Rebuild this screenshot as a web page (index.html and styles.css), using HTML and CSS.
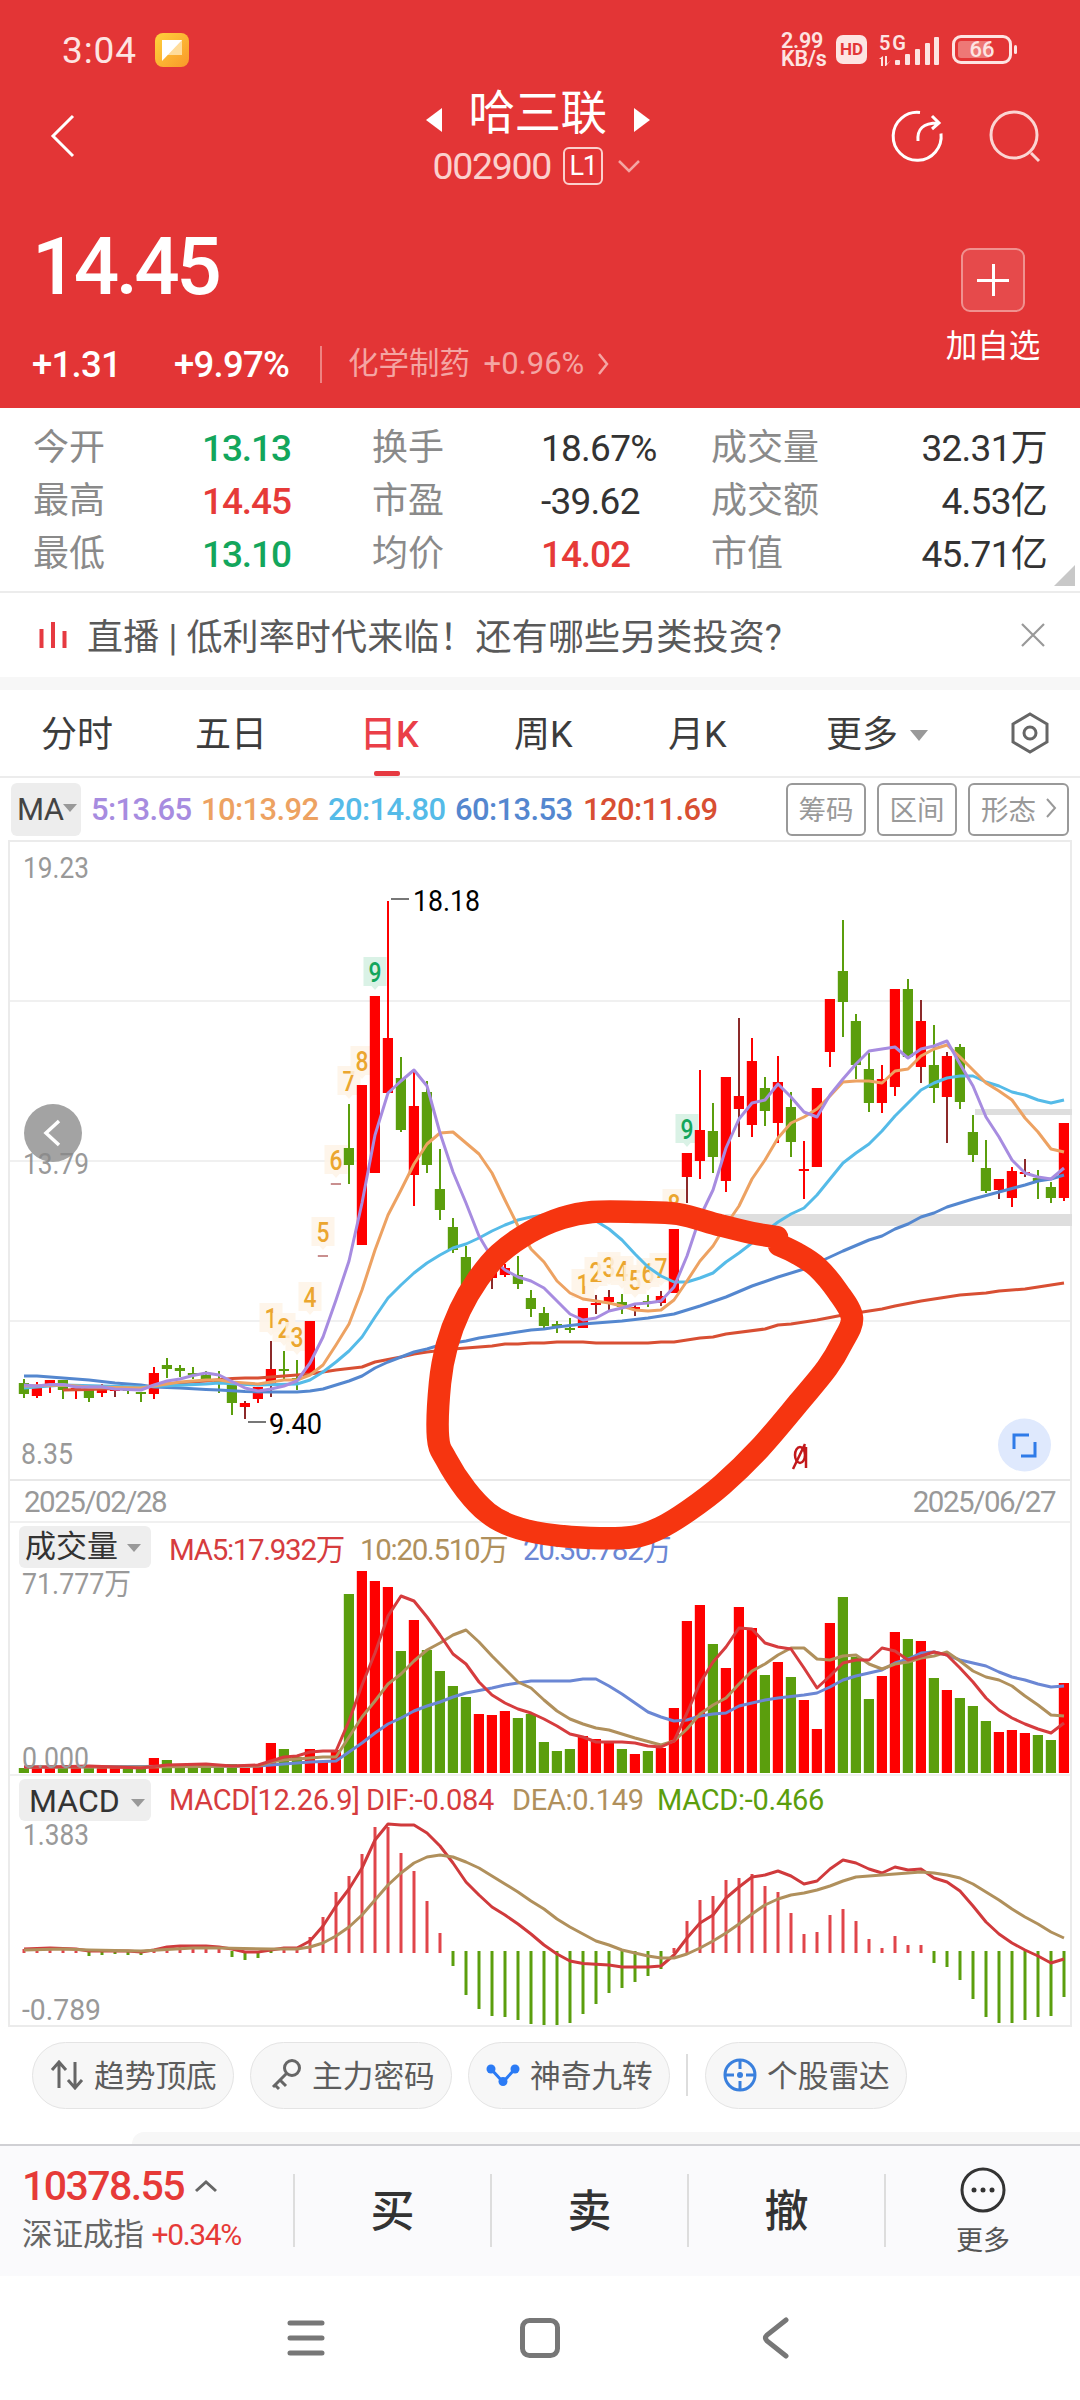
FILE: index.html
```html
<!DOCTYPE html>
<html lang="zh-CN">

<head>
  <meta charset="UTF-8" />
  <meta name="viewport" content="width=device-width, initial-scale=1" />
  <title>哈三联 002900</title>
  <link rel="stylesheet" href="styles.css">
</head>

<body>
  <header class="header">
    <div class="status-bar">
      <span class="clock">3:04</span>
      <svg class="note-icon" width="34" height="34" viewBox="0 0 34 34">
        <defs>
          <linearGradient id="noteBg" x1="0" y1="0" x2="1" y2="1">
            <stop offset="0" stop-color="#ffd23c" />
            <stop offset="1" stop-color="#f9982a" />
          </linearGradient>
        </defs>
        <rect width="34" height="34" rx="8" fill="url(#noteBg)" />
        <path d="M7 7h20v15H13z" fill="#ffdc9a" />
        <path d="M7 7h20L7 28z" fill="#fff" />
      </svg>
      <span class="net-speed">2.99<br>KB/s</span>
      <span class="hd">HD</span>
      <svg class="signal" width="62" height="32" viewBox="878 33 62 32">
        <text x="879" y="49" textLength="27">5G</text>
        <g fill="#fde4e2">
          <path d="M879 58l4-3v10h-2v-7zM885 55h2v8l4-4-5 6h-1z" />
          <rect x="895" y="59" width="5" height="5" rx="1" />
          <rect x="905" y="53" width="5" height="11" rx="1" />
          <rect x="915" y="48" width="5" height="16" rx="1" />
          <rect x="925" y="42" width="5" height="22" rx="1" />
          <rect x="934" y="36" width="5" height="28" rx="1" />
        </g>
      </svg>
      <span class="battery"><i></i><b>66</b></span>
    </div>

    <div class="title-bar">
      <svg class="back" width="26" height="44" viewBox="0 0 26 44"><path d="M23 2L3 22l20 20" /></svg>
      <div class="title">
        <div class="title-name">
          <svg width="16" height="24" viewBox="0 0 16 24"><path d="M16 0v24L0 12z" fill="#fff" /></svg>
          <h1>哈三联</h1>
          <svg width="16" height="24" viewBox="0 0 16 24"><path d="M0 0v24L16 12z" fill="#fff" /></svg>
        </div>
        <div class="title-code">
          <span>002900</span>
          <em>L1</em>
          <svg width="22" height="12" viewBox="0 0 22 12"><path d="M1 1l10 10L21 1" /></svg>
        </div>
      </div>
      <div class="title-icons">
        <svg width="52" height="52" viewBox="0 0 52 52">
          <path d="M28 2.500A24 24 0 1 0 49 23.500" />
          <path d="M26 31c-1-12 5-18 20-18M40 6l7 7-7 6" />
        </svg>
        <svg class="search" width="52" height="54" viewBox="0 0 52 54">
          <circle cx="25" cy="25" r="23" />
          <path d="M42 43l8 8" />
        </svg>
      </div>
    </div>

    <div class="quote">
      <div class="quote-main">
        <div class="price">14.45</div>
        <div class="change">
          <span class="chg">+1.31</span>
          <span class="pct">+9.97%</span>
          <span class="sector">化学制药 <b>+0.96%</b></span>
          <svg width="12" height="22" viewBox="0 0 12 22"><path d="M2 1l8 10-8 10" /></svg>
        </div>
      </div>
      <div class="add">
        <span class="add-btn"></span>
        <span>加自选</span>
      </div>
    </div>
  </header>

  <section class="stats">
    <span>今开</span><b class="down">13.13</b><span>换手</span><b>18.67%</b><span>成交量</span><b class="end">32.31万</b>
    <span>最高</span><b class="up">14.45</b><span>市盈</span><b>-39.62</b><span>成交额</span><b class="end">4.53亿</b>
    <span>最低</span><b class="down">13.10</b><span>均价</span><b class="up">14.02</b><span>市值</span><b class="end">45.71亿</b>
    <i class="corner"></i>
  </section>

  <section class="live">
    <svg width="28" height="26" viewBox="0 0 28 26">
      <path d="M2.500 7v19M14 0v26M25.500 9v17" stroke="#e63a41" stroke-width="4" />
    </svg>
    <p>直播 | 低利率时代来临！还有哪些另类投资?</p>
    <svg class="close" width="24" height="24" viewBox="0 0 24 24"><path d="M1 1l22 22M23 1L1 23" /></svg>
  </section>

  <nav class="tabs">
    <span>分时</span>
    <span>五日</span>
    <span class="active">日K</span>
    <span>周K</span>
    <span>月K</span>
    <span class="more">更多</span>
    <svg width="40" height="42" viewBox="0 0 40 42">
      <path d="M20 2l17 10v18L20 40 3 30V12z" />
      <circle cx="20" cy="21" r="6" />
    </svg>
  </nav>

  <section class="ma-row">
    <span class="ma-btn">MA</span>
    <span class="ma5">5:13.65</span>
    <span class="ma10">10:13.92</span>
    <span class="ma20">20:14.80</span>
    <span class="ma60">60:13.53</span>
    <span class="ma120">120:11.69</span>
    <div class="tools">
      <span>筹码</span>
      <span>区间</span>
      <span class="shape">形态<svg width="10" height="22" viewBox="0 0 10 22"><path d="M1 2l8 9-8 9" /></svg></span>
    </div>
  </section>

  <section class="chart">
    <svg id="price" width="1060" height="637" viewBox="10 842 1060 637"></svg>
    <div class="dates"><span>2025/02/28</span><span>2025/06/27</span></div>

    <div class="legend">
      <span class="legend-btn">成交量</span>
      <span class="c-red" style="width: 191px">MA5:17.932万</span>
      <span class="c-tan" style="width: 163px">10:20.510万</span>
      <span class="c-blue">20:30.782万</span>
    </div>
    <svg id="volume" width="1060" height="204" viewBox="10 1570 1060 204"></svg>

    <div class="legend macd-legend">
      <span class="legend-btn macd-btn">MACD</span>
      <span class="c-red" style="width: 197px">MACD[12.26.9]</span>
      <span class="c-red" style="width: 146px">DIF:-0.084</span>
      <span class="c-tan" style="width: 145px">DEA:0.149</span>
      <span class="c-green">MACD:-0.466</span>
    </div>
    <svg id="macd" width="1060" height="204" viewBox="10 1821 1060 204"></svg>

    <svg id="scribble" width="1060" height="1183" viewBox="10 842 1060 1183"></svg>
  </section>

  <section class="chips">
    <span class="chip">
      <svg width="34" height="32" viewBox="0 0 34 32"><path d="M9 29V4M2 11l7-8 7 8M25 3v25M18 21l7 8 7-8" /></svg><b>趋势顶底</b>
    </span>
    <span class="chip">
      <svg width="34" height="32" viewBox="0 0 34 32"><circle cx="24" cy="9" r="7.500" /><path d="M19 14L5 28M12 21l6 6M7 26l4 4" /></svg><b>主力密码</b>
    </span>
    <span class="chip">
      <svg width="34" height="32" viewBox="0 0 34 32"><path d="M5 10l12 13L29 10" stroke="#2b7bf5" /><g fill="#2b7bf5" stroke="none"><circle cx="5" cy="10" r="4.500" /><circle cx="17" cy="22.500" r="4.500" /><circle cx="29" cy="10" r="4.500" /></g></svg><b>神奇九转</b>
    </span>
    <i class="chip-line"></i>
    <span class="chip">
      <svg width="34" height="34" viewBox="0 0 34 34"><g stroke="#3a80dd"><circle cx="17" cy="17" r="15" /><path d="M17 2v9M17 23v9M2 17h9M23 17h9" /></g><circle cx="17" cy="17" r="3" fill="#3a80dd" stroke="none" /></svg><b>个股雷达</b>
    </span>
  </section>
  <div class="next-card"></div>

  <footer class="trade-bar">
    <div class="index">
      <div class="index-value">10378.55
        <svg width="24" height="13" viewBox="0 0 24 13"><path d="M2 11L12 2l10 9" /></svg>
      </div>
      <div class="index-name">深证成指 <b>+0.34%</b></div>
    </div>
    <span class="trade">买</span>
    <span class="trade">卖</span>
    <span class="trade">撤</span>
    <div class="trade-more">
      <svg width="46" height="46" viewBox="0 0 46 46">
        <circle cx="23" cy="23" r="21" />
        <g fill="#333" stroke="none"><circle cx="14" cy="23" r="2.500" /><circle cx="23" cy="23" r="2.500" /><circle cx="32" cy="23" r="2.500" /></g>
      </svg>
      <span>更多</span>
    </div>
  </footer>

  <div class="system-nav">
    <svg width="38" height="36" viewBox="0 0 38 36"><path d="M3 3h32M3 18h32M3 33h32" /></svg>
    <svg width="40" height="40" viewBox="0 0 40 40"><rect x="2.500" y="2.500" width="35" height="35" rx="7" /></svg>
    <svg width="28" height="40" viewBox="0 0 28 40"><path d="M25 2L6 17q-3 3 0 6l19 15" /></svg>
  </div>

  <script src="chart.js"></script>
</body>

</html>
```
FILE: styles.css
```css
html,
body {
  margin: 0;
  padding: 0;
  width: 1080px;
  background: #fff;
  font-family: Roboto, "Noto Sans CJK SC", sans-serif;
  color: #333;
}

* {
  box-sizing: border-box;
}

b,
em,
i,
h1 {
  font-weight: inherit;
  font-style: normal;
}

svg {
  display: block;
  flex: none;
  fill: none;
  overflow: visible;
}

.header {
  height: 408px;
  background: #e33536;
  color: #fff;
}

/* status bar */
.status-bar {
  height: 82px;
  padding: 17px 68px 0 62px;
  display: flex;
  align-items: center;
  color: #fde4e2;
}

.clock {
  font-size: 37px;
  line-height: 50px;
  width: 93px;
  padding-top: 2px;
  letter-spacing: 0.9px;
}

.net-speed {
  margin-left: auto;
  width: 55px;
  font-size: 21.500px;
  line-height: 18px;
  font-weight: 600;
  letter-spacing: -0.2px;
}

.hd {
  width: 31px;
  height: 29px;
  border-radius: 7px;
  background: #fde4e2;
  color: #e33536;
  font-size: 17px;
  line-height: 29px;
  font-weight: 700;
  text-align: center;
}

.signal {
  margin: 0 12px 0 11px;
}

.signal text {
  font: 600 20px Roboto, sans-serif;
  fill: #fde4e2;
}

.battery {
  position: relative;
  width: 60px;
  height: 29px;
  border: 3px solid #fde4e2;
  border-radius: 9px;
  text-align: center;
  font-size: 22px;
  line-height: 24px;
  font-weight: 500;
}

.battery i {
  position: absolute;
  left: 3px;
  top: 3px;
  width: 32px;
  height: 17px;
  border-radius: 3px;
  background: #ee7876;
}

.battery b {
  position: relative;
}

.battery::after {
  content: "";
  position: absolute;
  right: -8px;
  top: 7px;
  width: 3px;
  height: 9px;
  border-radius: 2px;
  background: #fde4e2;
}

/* title */
.title-bar {
  height: 118px;
  display: flex;
  justify-content: space-between;
  padding: 0 42px 0 50px;
}

.title-bar svg {
  stroke: #fff;
  stroke-width: 3;
}

.back {
  margin-top: 32px;
}

.title {
  padding-left: 107px;
}

.title-name {
  height: 61px;
  display: flex;
  justify-content: center;
  align-items: center;
  gap: 27px;
}

.title .title-name svg {
  stroke: none;
  margin-top: 15px;
}

.title h1 {
  margin: 0;
  font-size: 46.500px;
  line-height: 58px;
  letter-spacing: -0.5px;
}

.title-code {
  display: flex;
  align-items: center;
  height: 46px;
  padding-left: 7px;
  font-size: 37.500px;
  letter-spacing: -0.035em;
  color: #fbd0cd;
}

.title-code em {
  width: 40px;
  height: 38px;
  margin: 0 15px 0 12px;
  border: 2px solid #fbd0cd;
  border-radius: 6px;
  font-size: 27px;
  line-height: 34px;
  text-align: center;
  color: #fff;
}

.title .title-code svg {
  stroke: #f4a5a3;
  stroke-width: 2.5;
}

.title-icons {
  display: flex;
  gap: 45px;
  margin-top: 28px;
}

.title-icons .search {
  stroke: #fbd5d3;
  margin-right: -3px;
}

/* quote */
.quote {
  display: flex;
  justify-content: space-between;
  padding: 0 40px 0 32px;
}

.price {
  height: 134px;
  font-size: 80px;
  line-height: 134px;
  font-weight: 500;
  letter-spacing: -0.045em;
}

.change {
  display: flex;
  align-items: center;
  height: 60px;
  font-size: 36.500px;
  font-weight: 500;
  letter-spacing: -0.02em;
}

.chg {
  width: 142px;
}

.pct {
  width: 148px;
  height: 37px;
  line-height: 37px;
  border-right: 2px solid #ee8382;
}

.sector {
  width: 270px;
  padding-left: 26px;
  font-size: 30.500px;
  font-weight: 400;
  line-height: 36px;
  letter-spacing: 0;
  color: #f4a5a3;
  white-space: nowrap;
}

.sector b {
  font-size: 31px;
  margin-left: 6px;
}

.change svg {
  margin-left: 5px;
  stroke: #f4a5a3;
  stroke-width: 2.5;
}

.add {
  width: 94px;
  margin-top: 48px;
  font-size: 31.500px;
  line-height: 44px;
  display: flex;
  flex-direction: column;
  align-items: center;
  white-space: nowrap;
}

.add-btn {
  width: 64px;
  height: 64px;
  border: 2px solid #f0918f;
  border-radius: 9px;
  margin-bottom: 13px;
  background:
    linear-gradient(#fff, #fff) center / 32px 3px no-repeat,
    linear-gradient(#fff, #fff) center / 3px 32px no-repeat,
    #e64a4b;
}

/* stats */
.stats {
  position: relative;
  display: grid;
  grid-template-columns: 169px 170px 169px 170px 120px 216px;
  grid-auto-rows: 53px;
  height: 185px;
  padding: 14px 33px 0;
  border-bottom: 2px solid #ececec;
  font-size: 36px;
  line-height: 53px;
}

.stats span {
  color: #8a8a8a;
  white-space: nowrap;
}

.stats b {
  font-size: 37px;
  letter-spacing: -0.02em;
}

.stats .up,
.stats .down {
  font-weight: 500;
  letter-spacing: -0.03em;
}

.stats .end {
  text-align: right;
}

.stats .up {
  color: #e63a38;
}

.stats .down {
  color: #13a65c;
}

.corner {
  position: absolute;
  right: 5px;
  bottom: 5px;
  border-left: 21px solid transparent;
  border-bottom: 21px solid #c8c8c8;
}

/* live */
.live {
  display: flex;
  align-items: center;
  height: 97px;
  padding: 0 35px 0 39px;
  border-bottom: 13px solid #f7f7f7;
}

.live p {
  margin: -3px auto 0 20px;
  font-size: 36px;
  letter-spacing: 0.15px;
  color: #595959;
  white-space: nowrap;
}

.live .close {
  stroke: #999;
  stroke-width: 2.2;
}

/* tabs */
.tabs {
  display: flex;
  align-items: center;
  height: 88px;
  padding-left: 41px;
  border-bottom: 2px solid #ececec;
  font-size: 36px;
  color: #3c3c3c;
}

.tabs span {
  position: relative;
  width: 154px;
  height: 86px;
  line-height: 90px;
  white-space: nowrap;
}

.tabs span:nth-child(2) {
  width: 165px;
}

.tabs span:nth-child(5) {
  width: 158px;
}

.tabs .active {
  color: #ea3f48;
  font-weight: 500;
}

.tabs .active::after {
  content: "";
  position: absolute;
  left: 14px;
  bottom: 0;
  width: 26px;
  height: 5px;
  border-radius: 2px;
  background: #e63a41;
}

.tabs .more {
  width: 184px;
}

.more::after,
.ma-btn::after,
.legend-btn::after {
  content: "";
  display: inline-block;
  border: solid transparent;
  border-width: 11px 9px 0;
  border-top-color: #999;
  margin-left: 12px;
  vertical-align: 6px;
}

.tabs svg {
  stroke: #666;
  stroke-width: 3;
}

/* moving average row */
.ma-row {
  display: flex;
  align-items: center;
  height: 62px;
  padding: 0 11px;
  font-size: 31px;
  font-weight: 500;
  letter-spacing: -0.02em;
  white-space: nowrap;
}

.ma-btn {
  width: 70px;
  height: 53px;
  margin-right: 10px;
  padding-left: 6px;
  border-radius: 6px;
  background: #ededed;
  font-weight: 400;
  line-height: 54px;
  color: #444;
}

.ma-btn::after {
  border-width: 8px 7px 0;
  margin-left: 0;
  vertical-align: 8px;
}

.ma5 {
  width: 110px;
  color: #a78ce0;
}

.ma10 {
  width: 127px;
  color: #eda262;
}

.ma20 {
  width: 127px;
  color: #55bbe8;
}

.ma60 {
  width: 128px;
  color: #5487cf;
}

.ma120 {
  color: #d84f33;
}

.tools {
  display: flex;
  gap: 11px;
  margin-left: auto;
  font-weight: 400;
}

.tools span {
  display: flex;
  align-items: center;
  justify-content: center;
  width: 80px;
  height: 53px;
  padding-bottom: 2px;
  border: 2px solid #999;
  border-radius: 6px;
  font-size: 27.500px;
  letter-spacing: 0;
  color: #999;
}

.tools .shape {
  width: 101px;
  gap: 10px;
}

.shape svg {
  stroke: #999;
  stroke-width: 2;
}

/* charts */
.chart {
  position: relative;
  width: 1064px;
  height: 1187px;
  margin-left: 8px;
  border: 2px solid #ebebeb;
}

.chart text {
  font-family: Roboto, "Noto Sans CJK SC", sans-serif;
}

#scribble {
  position: absolute;
  left: 0;
  top: 0;
}

.dates {
  display: flex;
  justify-content: space-between;
  height: 44px;
  padding: 0 15px 0 14px;
  border-top: 2px solid #e8e8e8;
  border-bottom: 2px solid #f0f0f0;
  font-size: 29.500px;
  line-height: 43px;
  letter-spacing: -0.05em;
  color: #999;
}

.legend {
  display: flex;
  align-items: center;
  height: 47px;
  padding: 0 9px;
  font-size: 29.500px;
  letter-spacing: -0.044em;
  white-space: nowrap;
}

.legend-btn {
  width: 132px;
  height: 42px;
  margin-right: 18px;
  padding-left: 6px;
  border-radius: 6px;
  background: #eee;
  color: #333;
  font-size: 31px;
  line-height: 42px;
  letter-spacing: 0;
}

.legend-btn::after {
  border-width: 8px 7px 0;
  margin-left: 9px;
  vertical-align: 5px;
}

.macd-legend {
  padding-top: 2px;
  border-top: 2px solid #f0f0f0;
  font-size: 29px;
  letter-spacing: -0.01em;
}

.macd-btn {
  padding-left: 10px;
  font-size: 32px;
  line-height: 44px;
}

.macd-btn::after {
  margin-left: 11px;
}

.c-red {
  color: #d63c3e;
}

.c-tan {
  color: #b0905c;
}

.c-blue {
  color: #6b87d4;
}

.c-green {
  color: #5b9e0d;
}

/* chips */
.chips {
  display: flex;
  align-items: center;
  height: 105px;
  padding: 0 32px 9px;
}

.chip {
  display: flex;
  align-items: center;
  gap: 10px;
  width: 202px;
  height: 67px;
  margin-right: 16px;
  padding-left: 17px;
  border: 1.500px solid #e4e4e4;
  border-radius: 34px;
  background: #f7f7f7;
  font-size: 30.700px;
  color: #5c5c5c;
  white-space: nowrap;
}

.chip b {
  padding-bottom: 3px;
}

.chip svg {
  stroke: #666;
  stroke-width: 3;
}

.chip-line {
  width: 2px;
  height: 42px;
  margin-right: 17px;
  background: #ddd;
}

.next-card {
  height: 12px;
  margin-left: 132px;
  border-top-left-radius: 12px;
  background: #f7f7f7;
}

/* trade bar */
.trade-bar {
  display: flex;
  height: 132px;
  border-top: 2px solid #d0d0d4;
  background: #fafafc;
}

.index {
  width: 293px;
  padding: 14px 0 0 22px;
}

.index-value {
  display: flex;
  align-items: center;
  gap: 10px;
  height: 52px;
  font-size: 41px;
  font-weight: 500;
  letter-spacing: -0.038em;
  color: #e63a38;
}

.index-value svg {
  stroke: #666;
  stroke-width: 3;
}

.index-name {
  height: 46px;
  font-size: 30.500px;
  line-height: 45px;
  color: #666;
}

.index-name b {
  font-size: 30px;
  letter-spacing: -0.045em;
  color: #e63a38;
}

.trade {
  width: 197px;
  height: 73px;
  margin-top: 28px;
  border-left: 2px solid #ddd;
  font-size: 44px;
  line-height: 76px;
  font-weight: 500;
  text-align: center;
}

.trade-more {
  width: 196px;
  height: 73px;
  margin-top: 28px;
  border-left: 2px solid #ddd;
  display: flex;
  flex-direction: column;
  align-items: center;
  font-size: 27px;
  color: #555;
}

.trade-more svg {
  margin-top: -7px;
  stroke: #333;
  stroke-width: 3;
}

.trade-more span {
  line-height: 56px;
}

.system-nav {
  display: flex;
  align-items: center;
  height: 124px;
  padding-left: 287px;
  background: #fff;
}

.system-nav svg {
  stroke: #777;
  stroke-width: 5;
  stroke-linecap: round;
  margin-right: 195px;
}

.system-nav svg:nth-child(2) {
  margin-right: 201px;
}
```
FILE: chart.js
```js
const RED = "#fe0000";
const DARK = "#8c2a2a";
const GREEN = "#5b9e0d";

// x of the n-th trading day
const X = i => 24 + 13 * i;

// [color, body top, body bottom, high, low]
const candles = [
  ["g", 1383, 1394, 1379, 1398], ["r", 1386, 1396, 1382, 1398], ["r", 1380, 1384, 1380, 1393],
  ["g", 1380, 1390, 1380, 1399], ["r", 1388, 1390, 1388, 1399], ["g", 1388, 1398, 1388, 1402],
  ["r", 1388, 1393, 1384, 1397], ["d", 1389, 1391, 1389, 1397], ["g", 1389, 1391, 1389, 1394],
  ["g", 1392, 1394, 1392, 1402], ["r", 1373, 1394, 1367, 1399], ["g", 1365, 1369, 1358, 1378],
  ["g", 1368, 1371, 1365, 1377], ["g", 1373, 1375, 1367, 1379], ["g", 1375, 1379, 1371, 1380],
  ["g", 1380, 1383, 1371, 1393], ["g", 1385, 1403, 1385, 1415], ["d", 1403, 1407, 1401, 1419],
  ["r", 1387, 1399, 1387, 1403], ["d", 1369, 1384, 1341, 1397], ["g", 1369, 1371, 1351, 1380],
  ["g", 1378, 1379, 1360, 1390], ["r", 1321, 1374, 1321, 1374], ["f", 1255, 1257, 1255, 1257],
  ["f", 1183, 1185, 1183, 1185], ["g", 1148, 1165, 1104, 1184], ["r", 1085, 1245, 1085, 1245],
  ["r", 996, 1173, 996, 1173], ["r", 1038, 1093, 901, 1093], ["g", 1078, 1130, 1057, 1132],
  ["r", 1106, 1175, 1069, 1206], ["g", 1092, 1165, 1081, 1173], ["g", 1189, 1210, 1149, 1220],
  ["g", 1227, 1250, 1218, 1253], ["g", 1257, 1292, 1246, 1295], ["r", 1280, 1290, 1275, 1294],
  ["d", 1268, 1278, 1262, 1289], ["r", 1268, 1275, 1264, 1277], ["g", 1275, 1284, 1256, 1289],
  ["g", 1298, 1309, 1290, 1317], ["g", 1313, 1326, 1307, 1330], ["g", 1324, 1327, 1321, 1333],
  ["g", 1328, 1330, 1318, 1333], ["r", 1308, 1328, 1308, 1328], ["d", 1303, 1305, 1295, 1314],
  ["d", 1297, 1302, 1290, 1311], ["g", 1302, 1307, 1294, 1314], ["d", 1307, 1309, 1305, 1316],
  ["g", 1301, 1302, 1295, 1307], ["d", 1296, 1303, 1291, 1306], ["r", 1229, 1293, 1229, 1293],
  ["d", 1153, 1177, 1153, 1203], ["r", 1130, 1161, 1070, 1179], ["g", 1131, 1157, 1103, 1173],
  ["r", 1077, 1181, 1077, 1192], ["d", 1096, 1109, 1018, 1137], ["r", 1061, 1125, 1038, 1137],
  ["g", 1088, 1111, 1077, 1126], ["r", 1082, 1123, 1056, 1143], ["g", 1107, 1142, 1092, 1157],
  ["r", 1169, 1171, 1141, 1199], ["r", 1088, 1167, 1088, 1167], ["r", 999, 1052, 999, 1067],
  ["g", 971, 1002, 920, 1037], ["g", 1021, 1065, 1014, 1079], ["g", 1069, 1103, 1053, 1112],
  ["r", 1079, 1103, 1065, 1113], ["r", 989, 1087, 989, 1096], ["g", 989, 1057, 979, 1057],
  ["d", 1021, 1067, 1000, 1083], ["g", 1065, 1088, 1025, 1103], ["d", 1056, 1097, 1052, 1143],
  ["g", 1047, 1102, 1044, 1109], ["g", 1132, 1155, 1115, 1162], ["g", 1168, 1191, 1140, 1193],
  ["d", 1179, 1190, 1179, 1199], ["r", 1171, 1198, 1167, 1207], ["d", 1172, 1174, 1159, 1177],
  ["g", 1178, 1181, 1170, 1199], ["g", 1187, 1198, 1182, 1203], ["r", 1123, 1198, 1123, 1201]
];

// moving averages, [day, y] pairs
const ma120 = [3,1390, 5,1389.5, 7,1388.5, 9,1387, 10,1386, 11,1384, 13,1382, 14,1381, 16,1378.5, 17,1378, 18,1378, 20,1376, 22,1374, 23,1372, 24,1370, 26,1367, 27,1362, 29,1357, 30,1354, 31,1352, 33,1349, 36,1346, 37,1344, 38,1344, 39,1343, 40,1343, 41,1342, 43,1342, 44,1343, 48,1343, 49,1342, 50,1342, 52,1338, 53,1337, 54,1334, 57,1329, 58,1325, 59,1324, 61,1320, 63,1315, 66,1309, 67,1306, 69,1301, 72,1295, 74,1293, 75,1291, 77,1289, 80,1283];
const ma60 = [0,1376, 1,1376, 3,1378, 5,1380, 7,1383, 9,1385, 10,1387, 12,1388, 14,1389.5, 15,1390, 17,1391.5, 19,1392, 21,1392, 22,1391, 23,1389, 24,1385, 25,1381, 26,1376, 27,1368, 28,1362, 29,1357, 30,1352, 31,1349, 32,1345, 34,1341, 35,1338, 37,1334, 39,1330, 40,1329, 41,1327, 43,1324, 44,1323, 46,1321, 48,1318, 50,1314, 52,1306, 54,1297, 56,1286, 58,1277, 60,1269, 62,1257, 63,1251, 65,1240, 66,1236, 67,1229, 68,1224, 69,1217, 70,1213, 71,1207, 73,1199, 75,1192, 77,1185, 78,1181, 79,1179, 80,1175];
const ma20 = [0,1388, 3,1385, 9,1387, 14,1384, 15,1383, 18,1385, 21,1384, 22,1380, 23,1372, 24,1362, 25,1351, 26,1337, 27,1317, 28,1298, 29,1285, 30,1273, 31,1263, 32,1255, 33,1248, 34,1244, 35,1238, 36,1231, 37,1225, 38,1220, 39,1217, 41,1213, 43,1217, 44,1221, 45,1229, 46,1240, 47,1254, 48,1267, 49,1276, 50,1282, 51,1282, 52,1278, 53,1273, 54,1262, 55,1253, 56,1243, 57,1232, 58,1222, 59,1214, 60,1208, 61,1195, 62,1179, 63,1163, 64,1153, 65,1144, 66,1131, 67,1116, 68,1103, 69,1090, 70,1083, 71,1078, 72,1076, 73,1076, 74,1082, 75,1086, 76,1092, 77,1095, 78,1100, 79,1103, 80,1100];
const ma10 = [0,1386, 3,1385, 5,1387, 9,1388, 10,1386, 11,1384, 12,1382, 13,1381, 14,1380, 15,1380, 16,1382, 17,1383, 18,1384, 19,1382, 20,1380, 21,1380, 22,1375, 23,1365, 24,1345, 25,1324, 26,1290, 27,1250, 28,1215, 29,1190, 30,1164, 31,1144, 32,1133, 33,1132, 34,1143, 35,1154, 36,1173, 37,1200, 38,1226, 39,1249, 40,1262, 41,1281, 42,1293, 43,1299, 44,1301, 45,1303, 46,1306, 47,1310, 48,1311, 49,1310, 50,1300, 51,1281, 52,1261, 53,1246, 54,1225, 55,1206, 56,1179, 57,1160, 58,1138, 59,1123, 60,1117, 61,1109, 62,1096, 63,1082, 64,1081, 65,1081, 66,1083, 67,1071, 68,1069, 69,1056, 70,1049, 71,1045, 72,1057, 73,1070, 74,1083, 75,1091, 76,1100, 77,1118, 78,1132, 79,1149, 80,1152];
const ma5 = [0,1385, 1,1386, 2,1384.5, 3,1384.5, 4,1387, 5,1387, 6,1387, 7,1389, 9,1390, 10,1385, 11,1381, 12,1379, 13,1375.5, 14,1373, 15,1375, 16,1381.5, 17,1388, 18,1391, 19,1389, 20,1386, 21,1381, 22,1363, 23,1337, 24,1300, 25,1261, 26,1203, 27,1135, 28,1093, 29,1081, 30,1070, 31,1086, 32,1133, 33,1172, 34,1203, 35,1236, 36,1258, 37,1270, 38,1277, 39,1281, 40,1288, 41,1301, 42,1314, 43,1320, 44,1318, 45,1311, 46,1308, 47,1304, 48,1303, 49,1301, 50,1287, 51,1256, 52,1217, 53,1190, 54,1148, 55,1119, 56,1103, 57,1100, 58,1084, 59,1097, 60,1112, 61,1117, 62,1095, 63,1079, 64,1064, 65,1051, 66,1049, 67,1047, 68,1058, 69,1049, 70,1046, 71,1041, 72,1064, 73,1086, 74,1117, 75,1137, 76,1160, 77,1173, 78,1177, 79,1179, 80,1168];

// nine-turn markers: [day, label, top]
const turns = [
  [19, 1, 1303], [20, 2, 1313], [21, 3, 1322], [22, 4, 1282], [23, 5, 1217], [24, 6, 1145],
  [25, 7, 1066], [26, 8, 1046], [27, 9, 957],
  [43, 1, 1269], [44, 2, 1257], [45, 3, 1252], [46, 4, 1256], [47, 5, 1265], [48, 6, 1258],
  [49, 7, 1253], [50, 8, 1189], [51, 9, 1114]
];

const volumes = [
  5, 5, 6, 5, 6, 5, 5, 5, 5, 4, 15, 13, 8, 7, 7, 7, 9, 5, 7, 30,
  24, 16, 24, 11, 23, 179, 202, 192, 186, 122, 153, 123, 102, 87, 76, 59, 58, 62, 55, 59,
  31, 22, 24, 37, 34, 30, 24, 19, 22, 25, 65, 152, 168, 129, 105, 166, 145, 98, 111, 96,
  73, 44, 150, 176, 116, 74, 97, 141, 134, 132, 95, 83, 75, 67, 52, 41, 43, 40, 38, 33, 90
];
const vol20 = [0,1767, 18,1766, 20,1764, 22,1762, 24,1761, 25,1752, 26,1743, 27,1733, 28,1724, 29,1718, 30,1711, 31,1706, 32,1702, 33,1697, 34,1693, 36,1688, 37,1685, 38,1683, 39,1681, 42,1681, 43,1679, 44,1679, 45,1686, 46,1694, 47,1703, 48,1712, 49,1717, 50,1721, 51,1720, 52,1716, 53,1714, 54,1713, 55,1706, 56,1703, 57,1700, 58,1698, 60,1695, 61,1693, 62,1687, 63,1680, 64,1676, 65,1673, 66,1670, 67,1663, 68,1659, 69,1653, 70,1652, 71,1655, 72,1660, 73,1663, 74,1666, 75,1672, 76,1677, 77,1680, 78,1684, 79,1687, 80,1686];
const vol10 = [0,1767, 9,1767, 18,1766, 19,1762, 20,1760, 21,1759, 23,1757, 24,1757, 25,1737, 26,1717, 27,1701, 28,1684, 29,1674, 30,1661, 31,1650, 32,1643, 33,1635, 34,1630, 35,1642, 36,1656, 37,1669, 38,1682, 39,1688, 40,1700, 41,1711, 42,1719, 43,1724, 44,1728, 45,1730, 47,1738, 49,1745, 50,1741, 51,1729, 52,1714, 53,1705, 54,1698, 55,1684, 56,1671, 57,1664, 58,1655, 59,1648, 60,1648, 61,1659, 62,1660, 63,1656, 64,1655, 65,1664, 66,1669, 67,1664, 68,1662, 69,1658, 70,1656, 71,1652, 72,1661, 73,1671, 74,1677, 75,1680, 76,1686, 77,1696, 78,1705, 79,1715, 80,1716];
const vol5 = [0,1767, 2,1767, 5,1766, 9,1768, 11,1765, 14,1764, 16,1766, 18,1765, 20,1757, 21,1756, 22,1752, 23,1751, 24,1751, 25,1721, 26,1685, 27,1653, 28,1616, 29,1596, 30,1601, 31,1617, 32,1635, 33,1654, 34,1664, 35,1682, 36,1695, 37,1703, 38,1709, 39,1713, 40,1719, 41,1726, 42,1734, 43,1737, 44,1742, 46,1742, 47,1743, 48,1746, 49,1747, 50,1741, 51,1713, 52,1683, 53,1662, 54,1647, 55,1628, 56,1629, 57,1643, 58,1647, 59,1649, 60,1668, 61,1688, 62,1676, 63,1663, 64,1660, 65,1660, 66,1648, 67,1651, 68,1660, 69,1656, 70,1652, 71,1655, 72,1668, 73,1682, 74,1698, 75,1710, 76,1718, 77,1724, 78,1729, 79,1733, 80,1723];

const macdBars = [
  3, 2, 3, 2, 1, -4, -3, -2, -3, -3, 2, 5, 6, 6, 6, 4, -5, -8, -6, -1,
  4, 4, 15, 35, 60, 76, 98, 125, 125, 99, 81, 51, 19, -14, -43, -57, -64, -65, -68, -72,
  -73, -73, -71, -62, -52, -41, -36, -30, -24, -17, 4, 31, 52, 56, 72, 74, 78, 66, 60, 39,
  18, 20, 37, 43, 31, 13, 4, 16, 7, 7, -11, -15, -28, -47, -65, -71, -71, -68, -65, -64, -45
];
const dif = [0,1949, 2,1948, 4,1949, 5,1951, 8,1951, 9,1952, 10,1950, 11,1947, 12,1946, 14,1946, 15,1947, 16,1949, 17,1952, 18,1952, 20,1948, 21,1948, 22,1941, 23,1926, 24,1906, 25,1889, 26,1868, 27,1840, 28,1824, 29,1825, 30,1825, 31,1833, 32,1846, 33,1863, 34,1882, 35,1895, 36,1907, 37,1915, 38,1924, 39,1934, 40,1945, 41,1954, 42,1961, 43,1963.5, 45,1965, 46,1967, 48,1967, 49,1966, 50,1955, 51,1938, 52,1923, 53,1915, 54,1898, 55,1887, 56,1877, 57,1875, 58,1871, 59,1876, 60,1884, 61,1881, 62,1869, 63,1860, 64,1863, 65,1869, 66,1873, 67,1867, 68,1870, 69,1869, 70,1878, 71,1882, 72,1891, 73,1906, 74,1922, 75,1934, 76,1943, 77,1950, 78,1956, 79,1963, 80,1959];
const dea = [0,1950, 3,1949, 5,1950, 9,1951, 13,1948, 15,1948, 19,1949, 21,1949, 22,1947, 23,1943, 24,1936, 25,1927, 26,1915, 27,1900, 28,1885, 29,1873, 30,1863, 31,1857, 32,1855, 33,1857, 34,1862, 35,1868, 36,1876, 37,1884, 38,1892, 39,1901, 40,1909, 41,1919, 42,1927, 43,1934, 44,1941, 45,1945, 46,1950, 47,1953, 48,1956, 49,1958, 50,1958, 51,1954, 52,1948, 53,1941, 54,1933, 55,1924, 56,1914, 57,1905, 58,1899, 59,1895, 60,1893, 61,1890, 62,1886, 63,1881, 64,1877, 66,1875, 68,1873, 69,1872, 70,1873, 71,1875, 72,1878, 73,1884, 74,1892, 75,1900, 76,1909, 77,1917, 78,1924, 79,1932, 80,1938];

function line(data, color) {
  let pts = "";
  for (let i = 0; i < data.length; i += 2) pts += `${X(data[i])},${data[i + 1]} `;
  return `<polyline points="${pts}" stroke="${color}" stroke-width="3" stroke-linejoin="round"/>`;
}

function label(str, x, y, w, color, size) {
  return `<text x="${x}" y="${y}" textLength="${w}" lengthAdjust="spacingAndGlyphs" font-size="${size || 29.5}" fill="${color || "#999"}">${str}</text>`;
}

function rule(y, color) {
  return `<path d="M10 ${y}H1070" stroke="${color || "#f0f0f0"}" stroke-width="2"/>`;
}

function drawPrice() {
  let s = rule(1001) + rule(1161) + rule(1321);
  s += `<rect x="975" y="1109" width="97" height="6" fill="#dedede"/>`;
  s += `<rect x="725" y="1214" width="347" height="12" fill="#dedede"/>`;

  turns.forEach(([i, n, y]) => {
    const x = X(i);
    const green = n === 9;
    s += `<path d="M${x - 11.5} ${y}h23v29h-8l-3.500 4-3.500-4h-8z" fill="${green ? "#d3f0e2" : "#fef3e6"}" opacity=".85"/>`;
    s += `<text x="${x}" y="${y + 25}" text-anchor="middle" font-size="27" font-weight="500" textLength="13" lengthAdjust="spacingAndGlyphs" fill="${green ? "#13a65c" : "#eba62f"}">${n}</text>`;
  });

  candles.forEach(([c, top, bottom, high, low], i) => {
    const x = X(i);
    const fill = c === "g" ? GREEN : c === "f" ? "#c98f8f" : RED;
    s += `<path d="M${x} ${high}V${low}" stroke="${c === "d" ? DARK : fill}" stroke-width="2"/>`;
    s += `<rect x="${x - 5.2}" y="${top}" width="10.200" height="${bottom - top}" fill="${fill}"/>`;
  });

  s += line(ma120, "#d84f33") + line(ma60, "#5487cf") + line(ma20, "#55bbe8");
  s += line(ma10, "#eda262") + line(ma5, "#a78ce0");

  s += label("19.23", 23, 878, 66) + label("8.35", 21, 1464, 52);
  s += `<circle cx="53" cy="1133" r="29" fill="#a3a3a3"/><path d="M59 1121l-13 12 13 12" stroke="#fff" stroke-width="3.500"/>`;
  s += `<g opacity=".85">${label("13.79", 23, 1174, 66, "#888")}</g>`;
  s += `<path d="M391 899h18M248 1422h18" stroke="#777" stroke-width="2"/>`;
  s += label("18.18", 413, 911, 67, "#000") + label("9.40", 269, 1434, 53, "#000");

  // rights marker and expand button
  s += `<g stroke="#c2181b" stroke-width="2.500"><ellipse cx="800" cy="1455" rx="5" ry="8"/><path d="M793 1469l12-25M806 1447v21M802 1450l4-3"/></g>`;
  s += `<circle cx="1024.5" cy="1445" r="26.500" fill="#dfe9fd"/><path d="M1029 1435h-15v14M1035 1442v14h-14" stroke="#2f7be8" stroke-width="3"/>`;
  document.getElementById("price").innerHTML = s;
}

function drawVolume() {
  let s = "";
  volumes.forEach((h, i) => {
    s += `<rect x="${X(i) - 5.2}" y="${1773 - h}" width="10.200" height="${h}" fill="${candles[i][0] === "g" ? GREEN : RED}"/>`;
  });
  s += line(vol20, "#6b87d4") + line(vol10, "#b0905c") + line(vol5, "#d63c3e");
  s += label("71.777万", 22, 1594, 109) + label("0.000", 22, 1768, 67);
  document.getElementById("volume").innerHTML = s;
}

function drawMacd() {
  let s = "";
  macdBars.forEach((v, i) => {
    const y = v > 0 ? 1953 : 1951;
    s += `<path d="M${X(i)} ${y}V${1952 - v}" stroke="${v > 0 ? "#e0454a" : GREEN}" stroke-width="3"/>`;
  });
  s += line(dif, "#d03a3c") + line(dea, "#b0905c");
  s += label("1.383", 23, 1845, 66) + label("-0.789", 22, 2020, 79);
  document.getElementById("macd").innerHTML = s;
}

// Catmull-Rom through the points of the freehand circle
function drawScribble() {
  const p = [[777, 1237], [752, 1233], [719, 1225], [678, 1214], [640, 1212], [592, 1212], [562, 1218], [530, 1232], [499, 1254], [478, 1279], [460, 1310], [447, 1345], [440, 1383], [438, 1437], [446, 1459], [466, 1490], [488, 1513], [512, 1526], [545, 1534], [590, 1538], [633, 1537], [660, 1528], [688, 1511], [722, 1485], [760, 1448], [800, 1401], [827, 1368], [842, 1343], [852, 1318], [838, 1292], [817, 1267], [796, 1253], [779, 1245]];
  let d = `M${p[0]}`;
  for (let i = 0; i < p.length - 1; i++) {
    const a = p[i - 1] || p[i], b = p[i], c = p[i + 1], e = p[i + 2] || c;
    d += `C${b[0] + (c[0] - a[0]) / 6} ${b[1] + (c[1] - a[1]) / 6} ${c[0] - (e[0] - b[0]) / 6} ${c[1] - (e[1] - b[1]) / 6} ${c}`;
  }
  document.getElementById("scribble").innerHTML =
    `<path d="${d}" stroke="#f63510" stroke-width="22.500" stroke-linecap="round" stroke-linejoin="round"/>`;
}

drawPrice();
drawVolume();
drawMacd();
drawScribble();
```
